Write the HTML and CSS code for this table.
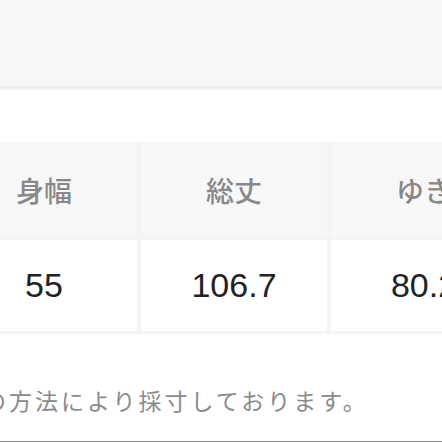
FILE: index.html
```html
<!DOCTYPE html>
<html lang="ja">
<head>
<meta charset="utf-8">
<link rel="stylesheet" href="styles.css">
</head>
<body>
<div class="page">
  <div class="top"></div>
  <div class="table">
    <div class="cell head">身幅</div>
    <div class="cell head">総丈</div>
    <div class="cell head">ゆき</div>
    <div class="cell data">55</div>
    <div class="cell data">106.7</div>
    <div class="cell data">80.2</div>
  </div>
  <p class="note">の方法により採寸しております。</p>
  <div class="rule"></div>
</div>
</body>
</html>
```
FILE: styles.css
```css
html, body {
  margin: 0;
  padding: 0;
  background: #ffffff;
}
.page {
  width: 442px;
  height: 442px;
  overflow: hidden;
  display: flex;
  flex-direction: column;
  font-family: "Noto Sans CJK JP", "Noto Sans", sans-serif;
}
.top {
  height: 86px;
  flex: none;
  background: #f7f7f7;
  border-bottom: 3px solid #eeeeee;
  box-shadow: 0 1px 0 #f6f6f6;
  margin-bottom: 53px;
}
.table {
  flex: none;
  display: grid;
  grid-template-columns: 186px 186px 186px;
  grid-template-rows: 95px 91px;
  column-gap: 4px;
  row-gap: 3px;
  margin-left: -49px;
  width: max-content;
  background: #f4f4f4;
  padding-bottom: 3px;
}
.cell {
  display: flex;
  align-items: center;
  justify-content: center;
}
.head {
  background: #f7f7f7;
  color: #888888;
  font-size: 28px;
  font-weight: 500;
}
.data {
  background: #ffffff;
  color: #222222;
  font-family: "Liberation Sans", Arial, sans-serif;
  font-size: 34px;
}
.note {
  margin: 51px 0 0 -17px;
  color: #8a8a8a;
  font-size: 23px;
  letter-spacing: 3px;
  line-height: 30px;
  white-space: nowrap;
}
.rule {
  margin-top: auto;
  height: 1px;
  flex: none;
  background: #888888;
}
```
